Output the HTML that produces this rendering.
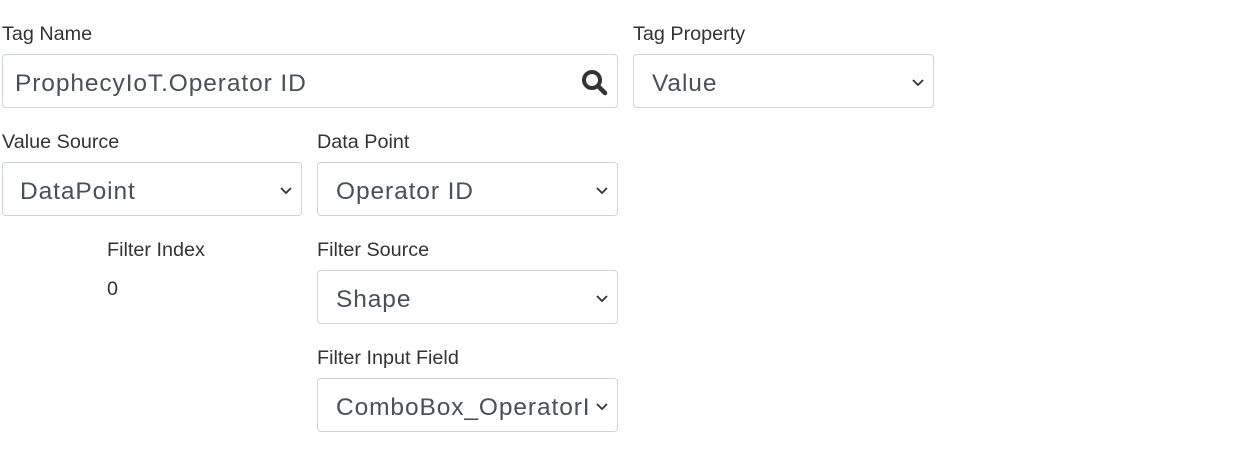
<!DOCTYPE html>
<html><head><style>
body{margin:0;width:1250px;height:455px;background:#fff;font-family:"Liberation Sans",sans-serif;position:relative;overflow:hidden}
.l{position:absolute;font-size:19.8px;color:#333;line-height:22px;white-space:nowrap}
.b{position:absolute;height:54px;border:1px solid #ced4da;border-radius:4px;box-sizing:border-box;overflow:hidden;background:#fff}
.t{position:absolute;left:12px;top:3px;line-height:52px;font-size:24.5px;color:#495057;letter-spacing:0.9px;white-space:nowrap}
.c{position:absolute;right:8px;top:20px;width:14px;height:14px;background:#fff}
.c svg{display:block}
</style></head><body>
<div class="l" style="left:2px;top:23px">Tag Name</div>
<div class="b" style="left:2px;top:54px;width:616px"><div class="t">ProphecyIoT.Operator ID</div>
<svg style="position:absolute;right:8px;top:14px" width="28" height="28" viewBox="0 0 28 28"><circle cx="11" cy="11" r="8" fill="none" stroke="#333" stroke-width="4"/><line x1="17" y1="17" x2="24" y2="24" stroke="#333" stroke-width="4.5" stroke-linecap="round"/></svg></div>
<div class="l" style="left:633px;top:23px">Tag Property</div>
<div class="b" style="left:633px;top:54px;width:301px"><div class="t" style="left:18px">Value</div><div class="c"><svg width="14" height="14"><path d="M2 5l5 5 5-5" fill="none" stroke="#333" stroke-width="1.8"/></svg></div></div>
<div class="l" style="left:2px;top:131px">Value Source</div>
<div class="b" style="left:2px;top:162px;width:300px"><div class="t" style="left:17px">DataPoint</div><div class="c"><svg width="14" height="14"><path d="M2 5l5 5 5-5" fill="none" stroke="#333" stroke-width="1.8"/></svg></div></div>
<div class="l" style="left:317px;top:131px">Data Point</div>
<div class="b" style="left:317px;top:162px;width:301px"><div class="t" style="left:18px">Operator ID</div><div class="c"><svg width="14" height="14"><path d="M2 5l5 5 5-5" fill="none" stroke="#333" stroke-width="1.8"/></svg></div></div>
<div class="l" style="left:107px;top:239px">Filter Index</div>
<div class="l" style="left:107px;top:278px">0</div>
<div class="l" style="left:317px;top:239px">Filter Source</div>
<div class="b" style="left:317px;top:270px;width:301px"><div class="t" style="left:18px">Shape</div><div class="c"><svg width="14" height="14"><path d="M2 5l5 5 5-5" fill="none" stroke="#333" stroke-width="1.8"/></svg></div></div>
<div class="l" style="left:317px;top:347px">Filter Input Field</div>
<div class="b" style="left:317px;top:378px;width:301px"><div class="t" style="left:18px;width:255px;overflow:hidden">ComboBox_OperatorID</div><div class="c"><svg width="14" height="14"><path d="M2 5l5 5 5-5" fill="none" stroke="#333" stroke-width="1.8"/></svg></div></div>
</body></html>
